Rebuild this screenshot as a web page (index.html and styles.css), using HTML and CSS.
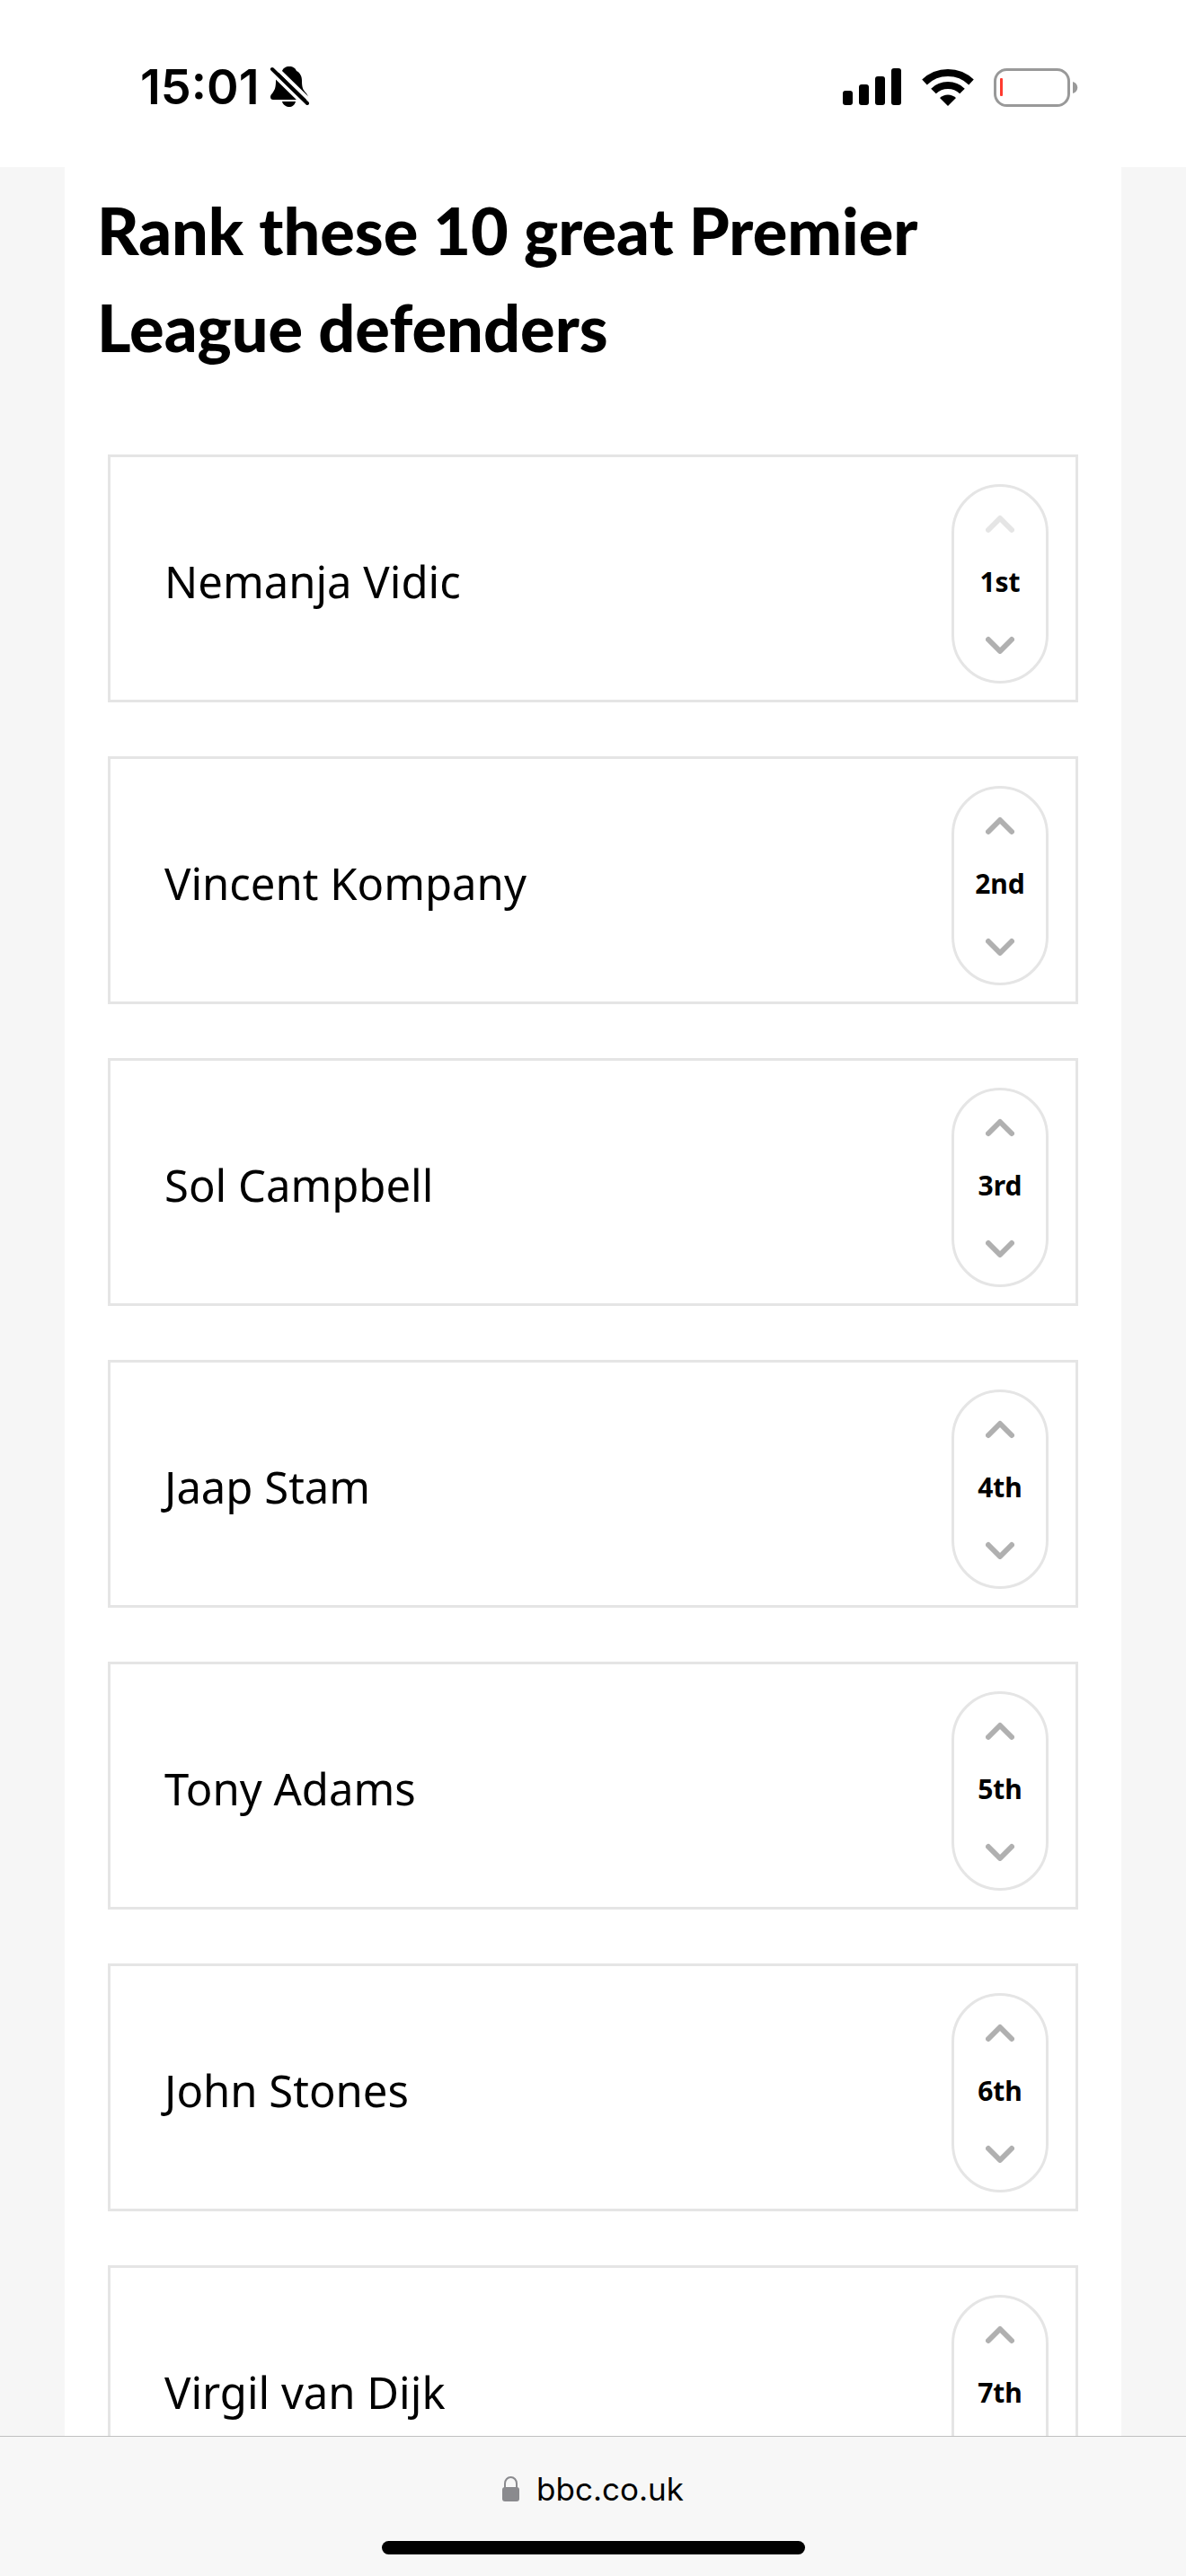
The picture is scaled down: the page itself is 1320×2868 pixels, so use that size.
FILE: index.html
```html
<!DOCTYPE html>
<html lang="en">
<head>
    <meta charset="UTF-8">
    <meta name="viewport" content="width=device-width, initial-scale=1.0">
    <title>Rank these 10 great Premier League defenders</title>
    <link rel="stylesheet" href="styles.css">
</head>
<body>
    <!-- Status bar -->
    <header class="status-bar">
        <div class="status-left">
            <span class="time">15:01</span>
            <svg class="bell" width="44" height="48" viewBox="0 0 44 48" aria-hidden="true">
                <path d="M22 1c-4 0-7 2-8 5-5 2-7 6-7 11 0 7-1 10-4 14-2 2-2 3-2 4 0 2 1 3 3 3h36c2 0 3-1 3-3 0-1-1-2-2-4-4-4-5-7-5-14 0-5-2-9-6-11-1-3-4-5-8-5z"/>
                <path d="M14 40h15c-1 4-4 6-7 6s-7-2-8-6z"/>
                <path d="M1 7l39 38M6 1l38 37" stroke="#fff" stroke-width="4"/>
                <path d="M3 4l39 38" stroke="#000" stroke-width="4" stroke-linecap="round"/>
            </svg>
        </div>
        <div class="status-right">
            <svg width="66" height="42" viewBox="0 0 66 42" aria-hidden="true">
                <rect x="0" y="25" width="11" height="16" rx="3"/>
                <rect x="18" y="18" width="11" height="23" rx="3"/>
                <rect x="36" y="9" width="11" height="32" rx="3"/>
                <rect x="54" y="0" width="11" height="41" rx="3"/>
            </svg>
            <svg width="58" height="42" viewBox="0 0 58 42" aria-hidden="true">
                <g fill="none" stroke="#000" stroke-width="8">
                    <path d="M3 15.500a37.500 37.500 0 0 1 52 0"/>
                    <path d="M13 25.500a23 23 0 0 1 32 0"/>
                </g>
                <path d="M29 42l-9-9a13 13 0 0 1 18 0z"/>
            </svg>
            <svg width="94" height="43" viewBox="0 0 94 43" aria-hidden="true">
                <rect x="1.500" y="1.500" width="82" height="40" rx="13" fill="none" stroke="#999" stroke-width="3"/>
                <rect x="7" y="11" width="3" height="20" rx="1" fill="#ff3b30"/>
                <path d="M88 15c7 2 7 11 0 13z" fill="#999"/>
            </svg>
        </div>
    </header>

    <!-- Ranking -->
    <main class="page">
        <div class="container">
            <h1>Rank these 10 great Premier League defenders</h1>
            <ol class="rank-list" id="rankList"></ol>
        </div>
    </main>

    <!-- Browser toolbar -->
    <footer class="toolbar">
        <button class="address" type="button">
            <svg width="20" height="28" viewBox="0 0 20 28" aria-hidden="true">
                <path d="M3 13V8a6.500 7 0 0 1 13 0v5" fill="none" stroke="#8a8a8e" stroke-width="2"/>
                <rect x="0" y="12" width="19" height="16" rx="3" fill="#8a8a8e"/>
            </svg>
            <span>bbc.co.uk</span>
        </button>
        <div class="home-indicator"></div>
    </footer>

    <script>
        const players = [
            'Nemanja Vidic',
            'Vincent Kompany',
            'Sol Campbell',
            'Jaap Stam',
            'Tony Adams',
            'John Stones',
            'Virgil van Dijk'
        ];
        const places = ['1st', '2nd', '3rd', '4th', '5th', '6th', '7th'];

        function arrow(points) {
            return `<svg width="32" height="22" viewBox="0 0 32 22" aria-hidden="true"><polyline points="${points}"/></svg>`;
        }

        function renderList() {
            document.getElementById('rankList').innerHTML = players.map((name, i) => `
                <li class="rank-item">
                    <span class="name">${name}</span>
                    <div class="stepper">
                        <button type="button" data-index="${i}" data-step="-1" aria-label="Move ${name} up" ${i === 0 ? 'disabled' : ''}>${arrow('3,18 16,5 29,18')}</button>
                        <span class="place">${places[i]}</span>
                        <button type="button" data-index="${i}" data-step="1" aria-label="Move ${name} down">${arrow('3,6 16,19 29,6')}</button>
                    </div>
                </li>`).join('');
        }

        // Swap a player with the one above or below
        document.getElementById('rankList').addEventListener('click', function(event) {
            const button = event.target.closest('button');
            if (!button) return;
            const from = Number(button.dataset.index);
            const to = from + Number(button.dataset.step);
            if (to < 0 || to >= players.length) return;
            [players[from], players[to]] = [players[to], players[from]];
            renderList();
        });

        renderList();
    </script>
</body>
</html>
```
FILE: styles.css
```css
* {
    margin: 0;
    padding: 0;
    box-sizing: border-box;
}

body {
    font-family: "Noto Sans", sans-serif;
    background: #f6f6f6;
    color: #000;
    height: 100vh;
    display: flex;
    flex-direction: column;
}

button {
    border: none;
    background: none;
    cursor: pointer;
}

svg {
    display: block;
}

/* Status bar */
.status-bar {
    display: flex;
    justify-content: space-between;
    align-items: center;
    height: 186px;
    padding: 8px 120px 0 156px;
    background: #fff;
    flex-shrink: 0;
}

.status-left {
    display: flex;
    align-items: center;
    gap: 12px;
}

.time {
    font-family: Inter, sans-serif;
    font-size: 54px;
    font-weight: 600;
    line-height: 60px;
}

.status-right {
    display: flex;
    align-items: center;
    gap: 22px;
}

/* Ranking */
.page {
    flex: 1;
    min-height: 0;
    overflow: hidden;
    padding: 0 72px;
}

.container {
    min-height: 100%;
    padding: 16px 48px 60px;
    background: #fff;
}

h1 {
    margin: 0 -12px 88px;
    font-family: Lato, sans-serif;
    font-size: 72px;
    font-weight: 900;
    line-height: 108px;
}

.rank-list {
    display: flex;
    flex-direction: column;
    gap: 60px;
    list-style: none;
}

.rank-item {
    display: flex;
    justify-content: space-between;
    align-items: center;
    padding: 30px 30px 18px 60px;
    border: 3px solid #e5e5e5;
}

.name {
    padding-bottom: 6px;
    font-size: 49px;
    line-height: 72px;
}

.stepper {
    display: flex;
    flex-direction: column;
    width: 108px;
    padding: 6px 0;
    border: 3px solid #e5e5e5;
    border-radius: 54px;
    text-align: center;
}

.stepper button {
    display: flex;
    justify-content: center;
    align-items: center;
    height: 70px;
}

.stepper polyline {
    fill: none;
    stroke: #b0b0b0;
    stroke-width: 6;
    stroke-linecap: round;
    stroke-linejoin: round;
}

.stepper button:disabled polyline {
    stroke: #e5e5e5;
}

.place {
    padding-bottom: 4px;
    font-size: 30px;
    font-weight: 700;
    line-height: 60px;
}

/* Browser toolbar */
.toolbar {
    display: flex;
    flex-direction: column;
    align-items: center;
    justify-content: space-between;
    height: 156px;
    padding: 34px 0 24px;
    border-top: 1px solid #c0c0c0;
    background: #f7f7f7;
    flex-shrink: 0;
}

.address {
    display: flex;
    align-items: center;
    gap: 18px;
    color: #000;
    font-family: Inter, sans-serif;
    font-size: 35px;
    line-height: 48px;
}

.home-indicator {
    width: 471px;
    height: 15px;
    border-radius: 8px;
    background: #000;
}
```
